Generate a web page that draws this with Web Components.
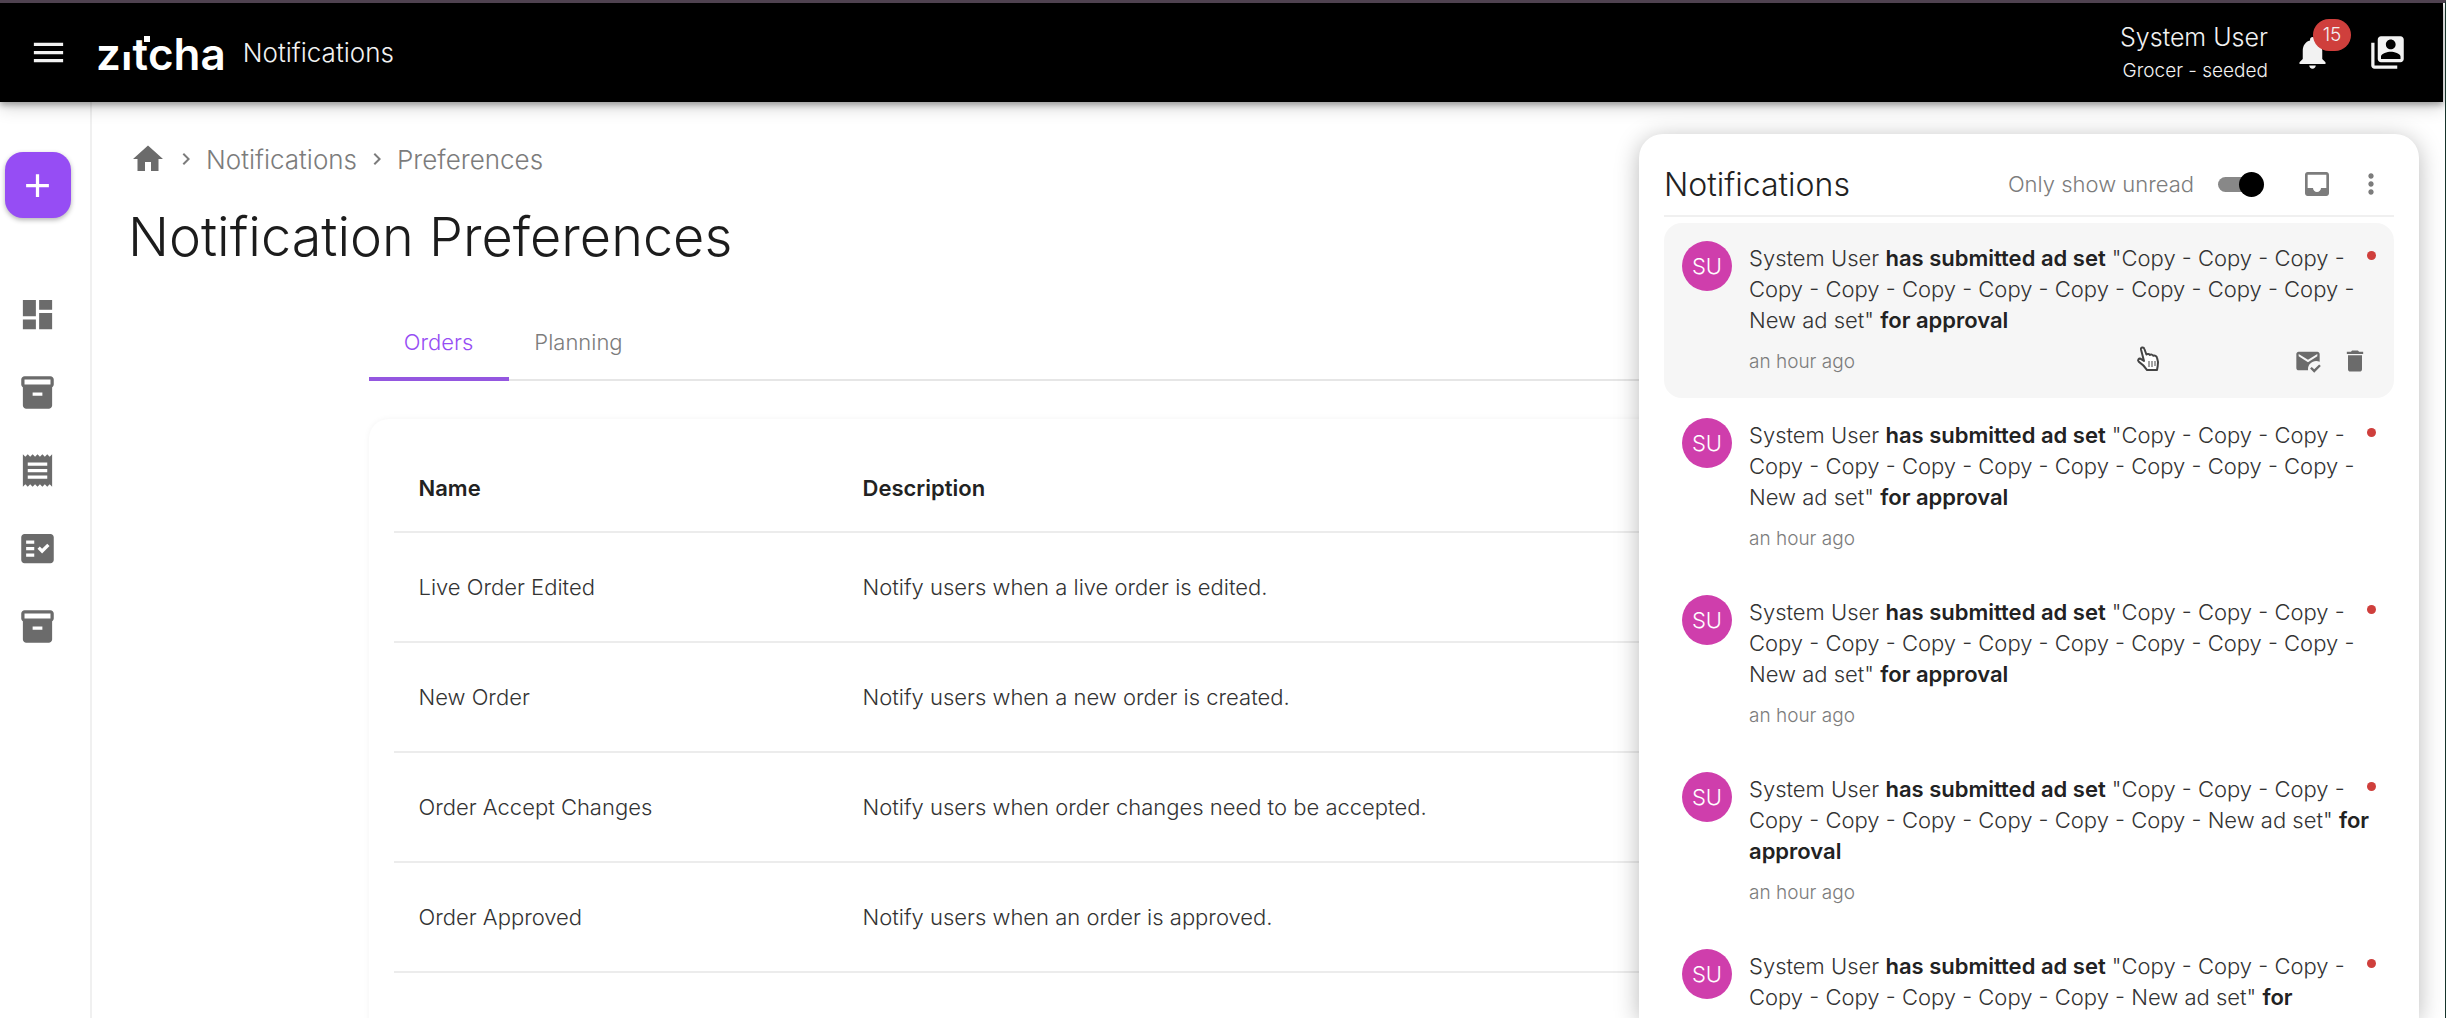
<!DOCTYPE html>
<html lang="en">
<head>
<meta charset="utf-8">
<title>Notification Preferences</title>
<style>
    html, body { height: 100%; }
    body {
        margin: 0;
        overflow: hidden;
        font-family: Inter, "Noto Sans", sans-serif;
        font-size: 22px;
        font-weight: 300;
        color: #333;
        background: #fff;
        --accent: #964df4;
        --muted: #7c7c7c;
        --icon: #6b6b6b;
        --line: #ececec;
        --alert: #cf3f3c;
    }
</style>
</head>
<body>
<zt-app>
    <zt-header slot="header" page="Notifications" user="System User" account="Grocer - seeded" count="15"></zt-header>
    <zt-rail slot="rail"></zt-rail>
    <zt-breadcrumbs>
        <a href="#notifications">Notifications</a>
        <a href="#preferences">Preferences</a>
    </zt-breadcrumbs>
    <zt-title>Notification Preferences</zt-title>
    <zt-preferences></zt-preferences>
    <zt-panel slot="panel">
        <zt-notification active copies="11"></zt-notification>
        <zt-notification copies="11"></zt-notification>
        <zt-notification copies="11"></zt-notification>
        <zt-notification copies="9"></zt-notification>
        <zt-notification copies="8"></zt-notification>
    </zt-panel>
</zt-app>

<script>
// ### Icons, all on a 24 unit grid ###
const ICONS = {
    menu: 'M3 18h18v-2H3v2zm0-5h18v-2H3v2zm0-7v2h18V6H3z',
    bell: 'M12 22c1.1 0 2-.9 2-2h-4c0 1.1.89 2 2 2zm6-6v-5c0-3.07-1.64-5.64-4.5-6.32V4c0-.83-.67-1.5-1.5-1.5s-1.5.67-1.5 1.5v.68C7.63 5.36 6 7.92 6 11v5l-2 2v1h16v-1l-2-2z',
    account: 'M4 6H2v14c0 1.1.9 2 2 2h14v-2H4V6zm16-4H8c-1.1 0-2 .9-2 2v12c0 1.1.9 2 2 2h12c1.1 0 2-.9 2-2V4c0-1.1-.9-2-2-2zm-6 2c1.66 0 3 1.34 3 3s-1.34 3-3 3-3-1.34-3-3 1.34-3 3-3zm6 12H8v-1.5c0-1.99 4-3 6-3s6 1.01 6 3V16z',
    add: 'M19 13h-6v6h-2v-6H5v-2h6V5h2v6h6v2z',
    dashboard: 'M3 13h8V3H3v10zm0 8h8v-6H3v6zm10 0h8V11h-8v10zm0-18v6h8V3h-8z',
    archive: 'M20 2H4c-1 0-2 .9-2 2v3.01c0 .72.43 1.34 1 1.69V20c0 1.1 1.1 2 2 2h14c.9 0 2-.9 2-2V8.7c.57-.35 1-.97 1-1.69V4c0-1.1-1-2-2-2zm-5 12H9v-2h6v2zm5-7H4V4h16v3z',
    receipt: 'M18 17H6v-2h12v2zm0-4H6v-2h12v2zm0-4H6V7h12v2zM3 22l1.5-1.5L6 22l1.5-1.5L9 22l1.5-1.5L12 22l1.5-1.5L15 22l1.5-1.5L18 22l1.5-1.5L21 22V2l-1.5 1.5L18 2l-1.5 1.5L15 2l-1.5 1.5L12 2l-1.5 1.5L9 2 7.5 3.5 6 2 4.5 3.5 3 2v20z',
    factcheck: 'M20 3H4c-1.1 0-2 .9-2 2v14c0 1.1.9 2 2 2h16c1.1 0 2-.9 2-2V5c0-1.1-.9-2-2-2zM10 17H5v-2h5v2zm0-4H5v-2h5v2zm0-4H5V7h5v2zm4.82 6L12 12.16l1.41-1.41 1.41 1.42L17.99 9l1.42 1.42L14.82 15z',
    home: 'M10 20v-6h4v6h5v-8h3L12 3 2 12h3v8z',
    chevron: 'M10 6 8.59 7.41 13.17 12l-4.58 4.59L10 18l6-6z',
    inbox: 'M19 3H5c-1.1 0-2 .9-2 2v14c0 1.1.9 2 2 2h14c1.1 0 2-.9 2-2V5c0-1.1-.9-2-2-2zm0 12h-4c0 1.66-1.35 3-3 3s-3-1.34-3-3H5V5h14v10z',
    more: 'M12 8c1.1 0 2-.9 2-2s-.9-2-2-2-2 .9-2 2 .9 2 2 2zm0 2c-1.1 0-2 .9-2 2s.9 2 2 2 2-.9 2-2-.9-2-2-2zm0 6c-1.1 0-2 .9-2 2s.9 2 2 2 2-.9 2-2-.9-2-2-2z',
    mailread: 'M12 19c0-3.87 3.13-7 7-7 1.08 0 2.09.25 3 .68V6c0-1.1-.9-2-2-2H4c-1.1 0-2 .9-2 2v12c0 1.1.9 2 2 2h8.08c-.05-.33-.08-.66-.08-1zM4 6l8 5 8-5v2l-8 5-8-5V6zm13.34 16-3.54-3.54 1.41-1.41 2.12 2.12 4.24-4.24L23 16.34 17.34 22z',
    trash: 'M6 19c0 1.1.9 2 2 2h8c1.1 0 2-.9 2-2V7H6v12zM19 4h-3.5l-1-1h-5l-1 1H5v2h14V4z'
};

const icon = (name, size) =>
    `<svg width="${size}" height="${size}" viewBox="0 0 24 24" fill="currentColor" aria-hidden="true"><path d="${ICONS[name]}"/></svg>`;

// Shared by every component, since outside rules do not reach the shadow roots
const RESET = `
    :host { display: block; box-sizing: border-box; }
    svg { display: block; flex: none; }
    button { border: 0; padding: 0; margin: 0; background: none; font: inherit; color: inherit; cursor: pointer; }
    a { color: inherit; text-decoration: none; }
`;

class BaseElement extends HTMLElement {
    constructor() {
        super();
        this.attachShadow({ mode: 'open' });
    }

    connectedCallback() {
        this.shadowRoot.innerHTML = `<style>${RESET}${this.styles()}</style>${this.template()}`;
    }
}

// ### Page shell ###
class ZtApp extends BaseElement {
    styles() {
        return `
            :host {
                display: grid;
                grid-template: auto 1fr / auto 1fr;
                height: 100vh;
                position: relative;
                overflow: hidden;
                border-top: 3px solid #4f4250;
                border-right: 1px solid #17352c;
                padding-right: 2px;
            }
            .header { grid-column: 1 / -1; z-index: 1; }
            main { padding: 36px 36px 0; min-width: 0; overflow: hidden; }
            .panel { position: absolute; top: 131px; right: 26px; bottom: 0; display: flex; }
        `;
    }

    template() {
        return `
            <div class="header"><slot name="header"></slot></div>
            <slot name="rail"></slot>
            <main><slot></slot></main>
            <div class="panel"><slot name="panel"></slot></div>
        `;
    }
}

// ### Top bar ###
class ZtHeader extends BaseElement {
    styles() {
        return `
            header {
                display: flex;
                align-items: center;
                height: 99px;
                box-sizing: border-box;
                padding: 0 36px 0 29px;
                background: #000;
                color: #f2f2f2;
                box-shadow: 0 3px 6px rgba(0, 0, 0, .3), 0 6px 16px rgba(0, 0, 0, .16);
            }
            .logo { margin-left: 28px; padding-top: 3px; font-size: 44px; font-weight: 600; line-height: 48px; color: #fff; }
            .logo i { position: relative; font-style: normal; }
            /* the dot of the i is moved to the top of the t */
            .logo .stem { display: inline-block; clip-path: inset(22px 0 0 0); }
            .logo .dot::after { content: ""; position: absolute; top: 9px; left: 12px; width: 6px; height: 6px; background: #fff; }
            .page { margin-left: 17px; font-size: 26px; }
            .who { margin-left: auto; text-align: right; }
            .user { font-size: 25px; line-height: 36px; }
            .account { font-size: 19px; line-height: 32px; }
            .bell { position: relative; margin: 0 36px 0 25px; }
            .badge {
                position: absolute;
                left: 20px;
                top: -14px;
                width: 38px;
                line-height: 32px;
                border-radius: 16px;
                background: var(--alert);
                font-size: 19px;
                text-align: center;
            }
        `;
    }

    template() {
        return `
            <header>
                <button aria-label="Menu">${icon('menu', 39)}</button>
                <a class="logo" href="#home" aria-label="zitcha">z<i class="stem">i</i><i class="dot">t</i>cha</a>
                <span class="page">${this.getAttribute('page')}</span>
                <div class="who">
                    <div class="user">${this.getAttribute('user')}</div>
                    <div class="account">${this.getAttribute('account')}</div>
                </div>
                <button class="bell" aria-label="Notifications">${icon('bell', 39)}<span class="badge">${this.getAttribute('count')}</span></button>
                <button aria-label="Switch account">${icon('account', 39)}</button>
            </header>
        `;
    }
}

// ### Left rail ###
class ZtRail extends BaseElement {
    styles() {
        return `
            :host { border-right: 2px solid #f0f0f0; }
            nav { display: flex; flex-direction: column; align-items: center; gap: 39px; width: 75px; margin-right: 15px; padding-top: 50px; color: var(--icon); }
            .add {
                display: grid;
                place-items: center;
                width: 66px;
                height: 66px;
                margin-bottom: 38px;
                border-radius: 18px;
                background: var(--accent);
                color: #fff;
                box-shadow: 0 2px 5px rgba(0, 0, 0, .3);
            }
        `;
    }

    template() {
        const links = [['dashboard', 'Dashboard'], ['archive', 'Inventory'], ['receipt', 'Orders'], ['factcheck', 'Planning'], ['archive', 'Archive']];
        return `
            <nav>
                <button class="add" aria-label="Create">${icon('add', 39)}</button>
                ${links.map(([name, label]) => `<a href="#" aria-label="${label}">${icon(name, 39)}</a>`).join('')}
            </nav>
        `;
    }
}

// ### Breadcrumbs, one slot per link passed in ###
class ZtBreadcrumbs extends BaseElement {
    connectedCallback() {
        [...this.children].forEach((link, i) => { link.slot = `crumb-${i}`; });
        super.connectedCallback();
    }

    styles() {
        return `
            nav { display: flex; align-items: center; height: 42px; gap: 8px; padding-left: 2px; font-size: 26px; color: var(--muted); }
            .home { color: var(--icon); }
            ::slotted(a) { color: inherit; text-decoration: none; }
        `;
    }

    template() {
        return `
            <nav aria-label="Breadcrumb">
                <a class="home" href="#home" aria-label="Home">${icon('home', 36)}</a>
                ${[...this.children].map((_, i) => `${icon('chevron', 24)}<slot name="crumb-${i}"></slot>`).join('')}
            </nav>
        `;
    }
}

class ZtTitle extends BaseElement {
    styles() {
        return `h1 { margin: 24px 0 0; font-size: 54px; line-height: 66px; font-weight: 300; color: #1c1c1c; }`;
    }

    template() {
        return `<h1><slot></slot></h1>`;
    }
}

// ### Tabs and the table of notification types ###
class ZtPreferences extends BaseElement {
    styles() {
        return `
            :host { max-width: 1798px; margin: 36px auto 0; }
            .tabs { display: flex; border-bottom: 2px solid #e6e6e6; }
            .tabs button { min-width: 140px; height: 75px; padding: 0 25px; color: var(--muted); border-bottom: 4px solid transparent; margin-bottom: -2px; }
            .tabs button[aria-selected="true"] { color: var(--accent); border-color: #9457e0; }
            .card { margin-top: 38px; padding: 25px; border-radius: 20px; box-shadow: 0 0 6px rgba(0, 0, 0, .05); }
            table { width: 100%; table-layout: fixed; border-collapse: collapse; text-align: left; }
            th, td { box-sizing: border-box; height: 110px; padding: 0 25px; border-bottom: 2px solid var(--line); }
            th { height: 88px; font-weight: 600; color: #222; }
            .name { width: 444px; }
        `;
    }

    template() {
        const rows = [
            ['Live Order Edited', 'Notify users when a live order is edited.'],
            ['New Order', 'Notify users when a new order is created.'],
            ['Order Accept Changes', 'Notify users when order changes need to be accepted.'],
            ['Order Approved', 'Notify users when an order is approved.']
        ];
        return `
            <div class="tabs" role="tablist">
                <button role="tab" aria-selected="true">Orders</button>
                <button role="tab" aria-selected="false">Planning</button>
            </div>
            <div class="card">
                <table>
                    <thead><tr><th class="name">Name</th><th>Description</th></tr></thead>
                    <tbody>
                        ${rows.map(([name, text]) => `<tr><td>${name}</td><td>${text}</td></tr>`).join('')}
                        <tr><td></td><td></td></tr>
                    </tbody>
                </table>
            </div>
        `;
    }
}

// ### Notification drawer ###
class ZtPanel extends BaseElement {
    styles() {
        return `
            :host {
                width: 780px;
                padding: 19px 25px 0;
                border-radius: 24px 24px 0 0;
                background: #fff;
                box-shadow: 0 4px 24px rgba(0, 0, 0, .28);
                overflow: hidden;
            }
            .bar { display: flex; align-items: center; height: 62px; padding-right: 7px; border-bottom: 2px solid #f0f0f0; margin-bottom: 6px; color: var(--muted); }
            h2 { margin: 0 auto 0 0; font-size: 32px; font-weight: 300; color: #222; }
            label { display: flex; align-items: center; gap: 24px; }
            input {
                appearance: none;
                position: relative;
                width: 38px;
                height: 15px;
                margin: 0 8px 0 0;
                border-radius: 8px;
                background: #888;
            }
            input::after { content: ""; position: absolute; top: -5px; right: -8px; width: 25px; height: 25px; border-radius: 50%; background: #000; }
            .inbox { margin: 0 22px 0 37px; }
        `;
    }

    template() {
        return `
            <div class="bar">
                <h2>Notifications</h2>
                <label>Only show unread<input type="checkbox" role="switch" checked></label>
                <button class="inbox" aria-label="Mark all as read">${icon('inbox', 32)}</button>
                <button aria-label="More">${icon('more', 32)}</button>
            </div>
            <slot></slot>
        `;
    }
}

class ZtNotification extends BaseElement {
    styles() {
        return `
            :host {
                display: grid;
                grid-template-columns: 67px 1fr;
                position: relative;
                height: 175px;
                margin-bottom: 2px;
                padding: 18px 16px 0 18px;
                border-radius: 18px;
            }
            :host([active]) { background: #f6f6f6; }
            .avatar { width: 50px; height: 50px; border-radius: 50%; background: #cf3eac; color: #fff; line-height: 50px; text-align: center; }
            p { margin: 2px 0 13px; line-height: 31px; }
            b { font-weight: 600; color: #222; }
            .foot { display: flex; align-items: center; gap: 19px; height: 24px; padding-right: 9px; color: var(--icon); }
            time { margin-right: auto; font-size: 19px; color: var(--muted); }
            /* unread badge in the corner */
            .dot { position: absolute; top: 28px; right: 18px; width: 9px; height: 9px; border-radius: 50%; background: var(--alert); }
            .cursor { position: absolute; left: 472px; top: 123px; }
        `;
    }

    template() {
        const active = this.hasAttribute('active');
        // each dash stays on the line of its word
        const copies = 'Copy&nbsp;- '.repeat(Number(this.getAttribute('copies')));
        return `
            <div class="avatar">SU</div>
            <div>
                <p>System User <b>has submitted ad set</b> "${copies}New ad set" <b>for approval</b></p>
                <div class="foot">
                    <time>an hour ago</time>
                    ${active ? `
                        <button aria-label="Mark as read">${icon('mailread', 28)}</button>
                        <button aria-label="Delete">${icon('trash', 28)}</button>` : ''}
                </div>
            </div>
            <div class="dot"></div>
            ${active ? `
                <svg class="cursor" width="25" height="26" viewBox="0 0 25 26" fill="#fff" stroke="#444" stroke-width="2" stroke-linejoin="round" aria-hidden="true">
                    <path d="M8 15 5 3.500C4.700 1.200 7.700 .8 8.400 3l2 5.500c1-1 3-.6 3.400.5 1.200-.9 3-.4 3.400.8 1.700-.6 3.300.2 3.800 1.800 1 2.800 1.600 5.400.7 8.400L21 24H11c-2-3.500-4.800-6-8.300-8.400-1.500-1.700.1-3.500 2-2.800z"/>
                    <path d="M13 15v6M16 15v6M19 15v5" stroke-width="1"/>
                </svg>` : ''}
        `;
    }
}

customElements.define('zt-app', ZtApp);
customElements.define('zt-header', ZtHeader);
customElements.define('zt-rail', ZtRail);
customElements.define('zt-breadcrumbs', ZtBreadcrumbs);
customElements.define('zt-title', ZtTitle);
customElements.define('zt-preferences', ZtPreferences);
customElements.define('zt-panel', ZtPanel);
customElements.define('zt-notification', ZtNotification);
</script>
</body>
</html>
